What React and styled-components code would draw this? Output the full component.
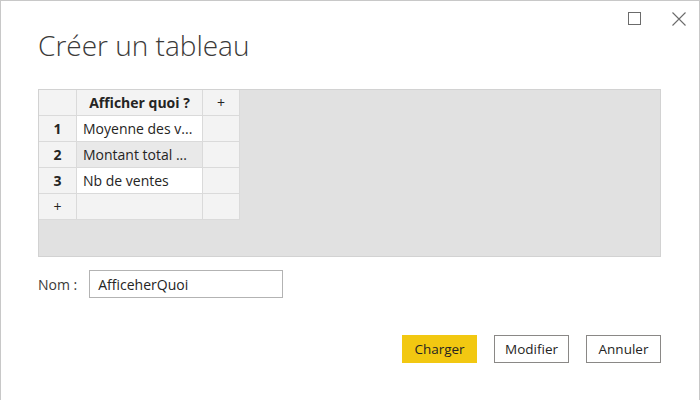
import React from "react";
import styled, { createGlobalStyle } from "styled-components";

const GlobalStyle = createGlobalStyle`
  html, body {
    margin: 0;
    padding: 0;
    background: #ffffff;
  }
  body {
    font-family: "Open Sans", "Liberation Sans", sans-serif;
    color: #252423;
  }
`;

const Window = styled.div`
  width: 700px;
  height: 400px;
  box-sizing: border-box;
  border: 1px solid #c8c8c8;
  border-bottom: none;
  background: #ffffff;
  display: flex;
  flex-direction: column;
`;

const TitleBar = styled.div`
  display: flex;
  justify-content: flex-end;
  align-items: center;
  gap: 30px;
  padding: 11px 13px 0 0;
  height: 14px;
`;

const WinButton = styled.span`
  display: flex;
  width: 14px;
  height: 14px;
  color: #6b6b6b;
`;

const Content = styled.div`
  padding: 0 38px 0 37px;
  display: flex;
  flex-direction: column;
`;

const Title = styled.h1`
  margin: 1px 0 0 0;
  font-size: 28px;
  line-height: 36px;
  font-weight: 300;
  color: #3b3a39;
`;

const Panel = styled.div`
  margin-top: 26px;
  height: 168px;
  box-sizing: border-box;
  background: #e1e1e1;
  border: 1px solid #d2d2d2;
`;

const Grid = styled.div`
  display: grid;
  grid-template-columns: 38px 126px 37px;
  grid-auto-rows: 26px;
  width: max-content;
`;

const Cell = styled.div`
  box-sizing: border-box;
  border-right: 1px solid #dadada;
  border-bottom: 1px solid #dadada;
  display: flex;
  align-items: center;
  justify-content: ${(p) => (p.$center ? "center" : "flex-start")};
  padding: ${(p) => (p.$center ? "0" : "0 6px")};
  font-size: 14px;
  font-weight: ${(p) => (p.$bold ? 700 : 400)};
  background: ${(p) => p.$bg || "#f3f3f3"};
  color: #252423;
  white-space: nowrap;
  overflow: hidden;
`;

const NameRow = styled.div`
  margin-top: 13px;
  display: flex;
  align-items: center;
  gap: 12px;
`;

const Label = styled.span`
  font-size: 14px;
  color: #3b3a39;
`;

const NameInput = styled.div`
  width: 194px;
  height: 28px;
  box-sizing: border-box;
  border: 1px solid #b3b3b3;
  display: flex;
  align-items: center;
  padding: 0 8px;
  font-size: 14px;
  color: #252423;
`;

const Footer = styled.div`
  margin-top: 37px;
  display: flex;
  justify-content: flex-end;
  gap: 17px;
`;

const Button = styled.button`
  width: 75px;
  height: 28px;
  box-sizing: border-box;
  font-family: inherit;
  font-size: 13.5px;
  color: #252423;
  background: ${(p) => (p.$primary ? "#f2c811" : "#ffffff")};
  border: 1px solid ${(p) => (p.$primary ? "#f2c811" : "#8a8886")};
  padding: 0;
`;

const rows = [
  { n: "1", text: "Moyenne des v...", bg: "#ffffff" },
  { n: "2", text: "Montant total ...", bg: "#e9e9e9" },
  { n: "3", text: "Nb de ventes", bg: "#ffffff" },
];

export default function App() {
  return (
    <>
      <GlobalStyle />
      <Window>
        <TitleBar>
          <WinButton>
            <svg width="14" height="14" viewBox="0 0 14 14">
              <rect x="0.5" y="0.5" width="12" height="12" fill="none" stroke="currentColor" strokeWidth="1" />
            </svg>
          </WinButton>
          <WinButton>
            <svg width="14" height="14" viewBox="0 0 14 14">
              <path d="M0.5 0.5 L13.5 13.5 M13.5 0.5 L0.5 13.5" stroke="currentColor" strokeWidth="1.1" />
            </svg>
          </WinButton>
        </TitleBar>
        <Content>
          <Title>Créer un tableau</Title>
          <Panel>
            <Grid>
              <Cell />
              <Cell $bold $center>Afficher quoi ?</Cell>
              <Cell $center>+</Cell>
              {rows.map((r) => (
                <React.Fragment key={r.n}>
                  <Cell $bold $center>{r.n}</Cell>
                  <Cell $bg={r.bg}>{r.text}</Cell>
                  <Cell />
                </React.Fragment>
              ))}
              <Cell $center>+</Cell>
              <Cell />
              <Cell />
            </Grid>
          </Panel>
          <NameRow>
            <Label>Nom :</Label>
            <NameInput>AfficeherQuoi</NameInput>
          </NameRow>
          <Footer>
            <Button $primary>Charger</Button>
            <Button>Modifier</Button>
            <Button>Annuler</Button>
          </Footer>
        </Content>
      </Window>
    </>
  );
}
